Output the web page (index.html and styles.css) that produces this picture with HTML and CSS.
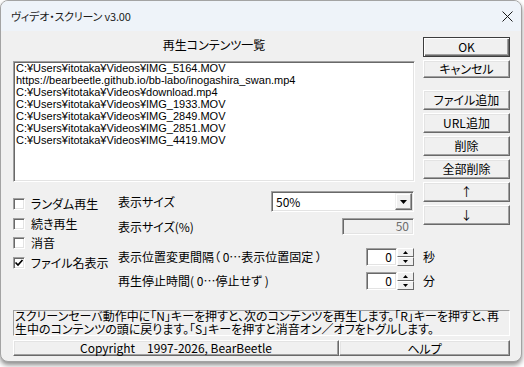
FILE: index.html
```html
<!DOCTYPE html>
<html lang="ja">
<head>
<meta charset="utf-8">
<title>ヴィデオ・スクリーン v3.00</title>
<link rel="stylesheet" href="styles.css">
</head>
<body>
<div class="window">
  <div class="titlebar">
    <span class="title">ヴィデオ・スクリーン v3.00</span>
    <svg class="close" width="11" height="11" viewBox="0 0 11 11"><path d="M0.5 0.5 L10.5 10.5 M10.5 0.5 L0.5 10.5" stroke="#1a1a1a" stroke-width="1"/></svg>
  </div>
  <div class="client">
    <div class="main">
      <div class="list-area">
        <div class="list-title">再生コンテンツ一覧</div>
        <div class="listbox">
          <div class="item">C:¥Users¥itotaka¥Videos¥IMG_5164.MOV</div>
          <div class="item">https://bearbeetle.github.io/bb-labo/inogashira_swan.mp4</div>
          <div class="item">C:¥Users¥itotaka¥Videos¥download.mp4</div>
          <div class="item">C:¥Users¥itotaka¥Videos¥IMG_1933.MOV</div>
          <div class="item">C:¥Users¥itotaka¥Videos¥IMG_2849.MOV</div>
          <div class="item">C:¥Users¥itotaka¥Videos¥IMG_2851.MOV</div>
          <div class="item">C:¥Users¥itotaka¥Videos¥IMG_4419.MOV</div>
        </div>
      </div>
      <div class="buttons">
        <button class="btn default">OK</button>
        <button class="btn cancel">キャンセル</button>
        <button class="btn">ファイル追加</button>
        <button class="btn">URL追加</button>
        <button class="btn">削除</button>
        <button class="btn">全部削除</button>
        <button class="btn">↑</button>
        <button class="btn">↓</button>
      </div>
      <div class="options">
        <div class="checks">
          <label class="check"><span class="box"></span>ランダム再生</label>
          <label class="check"><span class="box"></span>続き再生</label>
          <label class="check"><span class="box"></span>消音</label>
          <label class="check"><span class="box"><svg width="10" height="10" viewBox="0 0 10 10"><path d="M1.5 4.5 L4 7 L8.5 2" fill="none" stroke="#000" stroke-width="1.7"/></svg></span>ファイル名表示</label>
        </div>
        <div class="settings">
          <div class="srow r-combo">
            <span class="slabel">表示サイズ</span>
            <div class="combo"><span class="combo-text">50%</span><span class="drop"><svg width="7" height="4" viewBox="0 0 7 4"><path d="M0 0 H7 L3.5 4 Z" fill="#000"/></svg></span></div>
            <span class="unit"></span>
          </div>
          <div class="srow r-edit">
            <span class="slabel">表示サイズ(%)</span>
            <div class="edit disabled">50</div>
            <span class="unit"></span>
          </div>
          <div class="srow r-spin spaced">
            <span class="slabel">表示位置変更間隔（ 0…表示位置固定 ）</span>
            <div class="spin"><div class="edit">0</div><div class="spinner"><span class="sb"><svg width="5" height="3" viewBox="0 0 5 3"><path d="M0 3 H5 L2.5 0 Z" fill="#000"/></svg></span><span class="sb"><svg width="5" height="3" viewBox="0 0 5 3"><path d="M0 0 H5 L2.5 3 Z" fill="#000"/></svg></span></div></div>
            <span class="unit">秒</span>
          </div>
          <div class="srow r-spin">
            <span class="slabel">再生停止時間( 0…停止せず )</span>
            <div class="spin"><div class="edit">0</div><div class="spinner"><span class="sb"><svg width="5" height="3" viewBox="0 0 5 3"><path d="M0 3 H5 L2.5 0 Z" fill="#000"/></svg></span><span class="sb"><svg width="5" height="3" viewBox="0 0 5 3"><path d="M0 0 H5 L2.5 3 Z" fill="#000"/></svg></span></div></div>
            <span class="unit">分</span>
          </div>
        </div>
      </div>
    </div>
    <div class="info"><p class="info-text">スクリーンセーバ動作中に「N」キーを押すと、次のコンテンツを再生します。「R」キーを押すと、再<br>生中のコンテンツの頭に戻ります。「S」キーを押すと消音オン／オフをトグルします。</p></div>
    <div class="footer">
      <div class="panel copy">Copyright　1997-2026, BearBeetle</div>
      <button class="panel help">ヘルプ</button>
    </div>
  </div>
</div>
</body>
</html>
```

FILE: styles.css
```css
* { box-sizing: border-box; }
html, body { margin: 0; padding: 0; }
body {
  width: 524px;
  height: 367px;
  background: #ffffff;
  font-family: "Noto Sans CJK JP", "Noto Sans", sans-serif;
  font-size: 12px;
  color: #000;
  overflow: hidden;
}
.window {
  width: 522px;
  height: 362px;
  border: 1px solid #a3a3a3;
  border-radius: 8px;
  background: #f0f0f0;
  overflow: hidden;
  box-shadow: 0 3px 5px rgba(0,0,0,0.45);
}
.titlebar {
  height: 30px;
  background: #eef3f9;
  display: flex;
  align-items: center;
  justify-content: space-between;
  padding: 0 8px 0 10px;
}
.title {
  font-size: 11px;
  line-height: 14px;
  font-feature-settings: "palt";
  letter-spacing: -0.2px;
  color: #1b1b1b;
}
.close { display: block; }
.client {
  padding: 6px 11px 0 12px;
}
.main {
  display: grid;
  grid-template-columns: 402px 87px;
  column-gap: 8px;
}
.list-area { grid-column: 1; grid-row: 1; }
.list-title {
  height: 24px;
  line-height: 15px;
  text-align: center;
  font-feature-settings: "palt";
}
.listbox {
  height: 121px;
  background: #fff;
  border: 1px solid;
  border-color: #a0a0a0 #ffffff #ffffff #a0a0a0;
  box-shadow: inset 1px 1px #696969, inset -1px -1px #e3e3e3;
  padding: 0 2px;
  font-family: "Liberation Sans", Arial, sans-serif;
  font-size: 11px;
  line-height: 12px;
  white-space: nowrap;
  overflow: hidden;
}
.item { height: 12px; line-height: 12px; }
.buttons {
  grid-column: 2;
  grid-row: 1 / 3;
  display: flex;
  flex-direction: column;
  gap: 3px;
  position: relative;
  z-index: 1;
}
.btn, .panel {
  font-family: inherit;
  font-size: 12px;
  color: #000;
  background: #f0f0f0;
  border: 1px solid;
  border-color: #ffffff #696969 #696969 #ffffff;
  box-shadow: inset -1px -1px #a0a0a0, inset 1px 1px #e3e3e3;
  padding: 0;
  margin: 0;
  font-feature-settings: "palt";
}
.btn {
  height: 20px;
  width: 100%;
  line-height: 16px;
}
.btn.default {
  border: 1px solid #3c3c3c;
  box-shadow: inset 1px 1px #ffffff, inset -1px -1px #696969, inset -2px -2px #a0a0a0;
}
.btn.cancel {
  height: 18px;
  margin-bottom: 9px;
}
.options {
  grid-column: 1 / -1;
  grid-row: 2;
  display: flex;
}
.checks {
  width: 105px;
  padding-top: 16px;
  display: flex;
  flex-direction: column;
  row-gap: 7.5px;
}
.check {
  height: 12px;
  display: flex;
  align-items: center;
  gap: 6px;
  line-height: 12px;
  font-feature-settings: "palt";
}
.box {
  width: 12px;
  height: 12px;
  flex: none;
  background: #fff;
  border: 1px solid;
  border-color: #a0a0a0 #ffffff #ffffff #a0a0a0;
  box-shadow: inset 1px 1px #696969, inset -1px -1px #e3e3e3;
  display: flex;
  align-items: center;
  justify-content: center;
}
.box svg { display: block; }
.settings {
  flex: 1;
  padding-top: 9px;
  display: flex;
  flex-direction: column;
}
.srow {
  display: flex;
  align-items: center;
}
.srow + .srow { margin-top: 6px; }
.srow.spaced { margin-top: 13px; }
.r-combo { height: 21px; }
.r-edit { height: 17px; }
.r-spin { height: 18px; }
.slabel {
  flex: 1;
  line-height: 14px;
  font-feature-settings: "palt";
  white-space: nowrap;
}
.unit {
  width: 96px;
  padding-left: 9px;
  line-height: 14px;
}
.combo {
  width: 143px;
  height: 21px;
  background: #fff;
  border: 1px solid;
  border-color: #a0a0a0 #ffffff #ffffff #a0a0a0;
  box-shadow: inset 1px 1px #696969, inset -1px -1px #e3e3e3;
  display: flex;
  align-items: center;
  padding: 2px 1px 2px 2px;
}
.combo-text {
  flex: 1;
  padding-left: 2px;
  line-height: 14px;
}
.drop {
  width: 17px;
  height: 17px;
  background: #f0f0f0;
  border: 1px solid;
  border-color: #f0f0f0 #696969 #696969 #f0f0f0;
  box-shadow: inset -1px -1px #a0a0a0, inset 1px 1px #ffffff;
  display: flex;
  align-items: center;
  justify-content: center;
}
.drop svg, .sb svg { display: block; }
.edit {
  height: 100%;
  background: #fff;
  border: 1px solid;
  border-color: #a0a0a0 #ffffff #ffffff #a0a0a0;
  box-shadow: inset 1px 1px #696969, inset -1px -1px #e3e3e3;
  text-align: right;
  padding-right: 4px;
  line-height: 15px;
}
.edit.disabled {
  width: 72px;
  background: #f0f0f0;
  color: #6d6d6d;
  line-height: 14px;
}
.spin {
  display: flex;
  height: 18px;
}
.spin .edit { width: 31px; }
.spinner {
  width: 17px;
  display: flex;
  flex-direction: column;
}
.sb {
  flex: 1;
  background: #f0f0f0;
  border: 1px solid;
  border-color: #ffffff #696969 #696969 #ffffff;
  display: flex;
  align-items: center;
  justify-content: center;
}
.info {
  margin-top: 20px;
  height: 26px;
  border: 1px solid;
  border-color: #a0a0a0 #ffffff #ffffff #a0a0a0;
  padding: 0 0 0 1px;
}
.info-text {
  margin: -2px 0 0 0;
  font-size: 12px;
  line-height: 13px;
  white-space: nowrap;
  font-feature-settings: "palt";
}
.footer {
  margin-top: 4px;
  height: 16px;
  display: flex;
}
.panel {
  height: 16px;
  line-height: 13px;
  text-align: center;
}
.copy { width: 326px; }
.help { flex: 1; }
```
